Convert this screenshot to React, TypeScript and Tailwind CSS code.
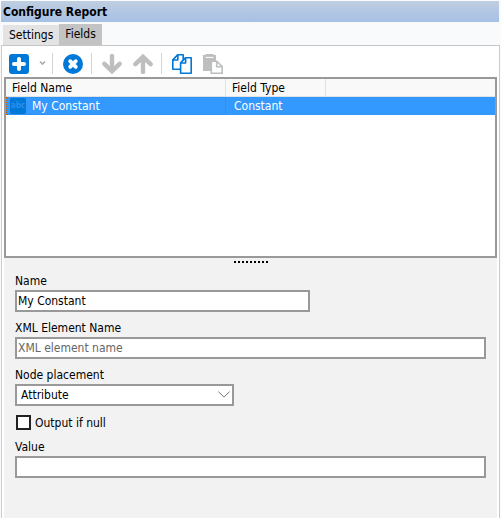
import React, { useState } from 'react';

interface Field {
  id: number;
  name: string;
  type: string;
}

const fields: Field[] = [{ id: 1, name: 'My Constant', type: 'Constant' }];

const inputClass =
  'block h-[22px] w-full rounded-none border-2 border-[#999999] bg-white px-px text-black placeholder:text-[#666666] outline-none';

const Separator: React.FC = () => <div className="h-[21px] w-px bg-[#d2d4d6]" />;

const AddIcon: React.FC = () => (
  <svg className="h-5 w-5" viewBox="0 0 20 20">
    <rect width="20" height="20" rx="3" fill="#0078d7" />
    <path d="M10 5v10M5 10h10" stroke="#fff" strokeWidth="4" strokeLinecap="round" />
  </svg>
);

const CaretIcon: React.FC = () => (
  <svg className="h-5 w-[7px]" viewBox="0 0 7 20">
    <path d="M1 7.5L3.5 10L6 7.5" fill="none" stroke="#a9abad" strokeWidth="1.6" />
  </svg>
);

const DeleteIcon: React.FC = () => (
  <svg className="h-5 w-5" viewBox="0 0 20 20">
    <circle cx="10" cy="10" r="10" fill="#0078d7" />
    <path d="M7.2 7.2l5.6 5.6M12.8 7.2l-5.6 5.6" stroke="#fff" strokeWidth="3.8" strokeLinecap="round" />
  </svg>
);

const DownIcon: React.FC = () => (
  <svg className="h-5 w-5" viewBox="0 0 20 20">
    <path d="M10 2v14M2.4 9.8L10 17.2l7.6-7.4" fill="none" stroke="#bcbec0" strokeWidth="4.4" strokeLinecap="round" />
  </svg>
);

const UpIcon: React.FC = () => (
  <svg className="h-5 w-5" viewBox="0 0 20 20">
    <path d="M10 18V4M2.4 10.2L10 2.8l7.6 7.4" fill="none" stroke="#bcbec0" strokeWidth="4.4" strokeLinecap="round" />
  </svg>
);

const CopyIcon: React.FC = () => (
  <svg className="h-5 w-5" viewBox="0 0 20 20" fill="#fff" stroke="#0078d7" strokeWidth="1.6" strokeLinejoin="round">
    <path d="M5.8.8h5.4v14.4H.8V6z" />
    <path d="M5.8.8V6H.8" />
    <path d="M13.6 3.8h5.6v15.4H8.6V9z" />
    <path d="M13.6 3.8V9h-5" />
    <path d="M5.8.8L.8 6M13.6 3.8l-5 5.2" />
  </svg>
);

const PasteIcon: React.FC = () => (
  <svg className="h-5 w-5" viewBox="0 0 20 20">
    <path d="M0 1h2.5V0h8v1H13v6H8v10H0z" fill="#bcbec0" />
    <path d="M2.5 3.4h8" stroke="#fff" strokeWidth="1" />
    <path d="M8.3 7.2h5.4l5.5 5.5v6.5H8.3z" fill="#fff" stroke="#bcbec0" strokeWidth="1.6" />
    <path d="M13.7 7.2v5.5h5.5" fill="none" stroke="#bcbec0" strokeWidth="1.6" />
  </svg>
);

const Toolbar: React.FC = () => (
  <div className="flex h-[31px] items-center bg-white pt-1 pl-[5px]">
    <button type="button" aria-label="Add field">
      <AddIcon />
    </button>
    <button type="button" aria-label="More field types" className="mr-[6px] ml-[10px]">
      <CaretIcon />
    </button>
    <Separator />
    <button type="button" aria-label="Delete field" className="mr-2 ml-[10px]">
      <DeleteIcon />
    </button>
    <Separator />
    <button type="button" aria-label="Move down" className="ml-[10px]" disabled>
      <DownIcon />
    </button>
    <button type="button" aria-label="Move up" className="mr-2 ml-[11px]" disabled>
      <UpIcon />
    </button>
    <Separator />
    <button type="button" aria-label="Copy" className="ml-[10px]">
      <CopyIcon />
    </button>
    <button type="button" aria-label="Paste" className="ml-[11px]" disabled>
      <PasteIcon />
    </button>
  </div>
);

const FieldTable: React.FC = () => (
  <div className="h-[181px] border-2 border-[#999999] bg-white">
    <table className="w-full table-fixed border-separate border-spacing-0 text-left">
      <thead>
        <tr className="h-[18px] bg-[#f9f9f9]">
          <th className="w-[220px] border-r border-b border-[#e2e2e2] p-0 pt-[2px] pl-[6px] font-normal">Field Name</th>
          <th className="w-[100px] border-r border-b border-[#e2e2e2] p-0 pt-[2px] pl-[6px] font-normal">Field Type</th>
          <th className="border-b border-[#e2e2e2] p-0" />
        </tr>
      </thead>
      <tbody>
        {fields.map((field) => (
          <tr key={field.id} className="bg-[#3399ff] text-white">
            <td className="p-0">
              <div className="flex h-[18px] items-center border border-dotted border-[#cc6600] pl-[3px]">
                <span className="mr-[6px] flex h-4 w-4 items-center justify-center rounded-xs bg-[#0078d7] text-[8px] leading-none font-bold text-[#2b90ee]">
                  abc
                </span>
                <span className="pt-px">{field.name}</span>
              </div>
            </td>
            <td className="p-0 pt-px pl-[8px]">{field.type}</td>
            <td className="p-0" />
          </tr>
        ))}
      </tbody>
    </table>
  </div>
);

const FieldForm: React.FC = () => {
  const [name, setName] = useState('My Constant');
  const [elementName, setElementName] = useState('');
  const [placement, setPlacement] = useState('Attribute');
  const [outputIfNull, setOutputIfNull] = useState(false);
  const [value, setValue] = useState('');

  return (
    <form className="flex flex-col px-[11px] pt-2">
      <label htmlFor="name" className="pt-px pb-px">Name</label>
      <div className="mb-2 max-w-[295px]">
        <input id="name" className={inputClass} value={name} onChange={(e) => setName(e.target.value)} />
      </div>

      <label htmlFor="element" className="pt-px pb-px">XML Element Name</label>
      <div className="mb-2">
        <input
          id="element"
          className={inputClass}
          placeholder="XML element name"
          value={elementName}
          onChange={(e) => setElementName(e.target.value)}
        />
      </div>

      <label htmlFor="placement" className="pt-px pb-px">Node placement</label>
      <div className="relative mb-2 max-w-[219px]">
        <select
          id="placement"
          className="block h-[22px] w-full appearance-none rounded-none border-2 border-[#999999] bg-white pl-1 outline-none"
          value={placement}
          onChange={(e) => setPlacement(e.target.value)}
        >
          <option>Attribute</option>
          <option>Element</option>
        </select>
        <svg className="pointer-events-none absolute top-[7px] right-1 h-[7px] w-3" viewBox="0 0 12 7">
          <path d="M.4.6L6 6l5.6-5.4" fill="none" stroke="#777" />
        </svg>
      </div>

      <div className="mb-2 flex h-[17px] items-center gap-1 pl-px">
        <input
          id="output-null"
          type="checkbox"
          className="h-[15px] w-[15px] appearance-none border-2 border-[#222222] bg-white checked:bg-[#0078d7]"
          checked={outputIfNull}
          onChange={(e) => setOutputIfNull(e.target.checked)}
        />
        <label htmlFor="output-null" className="pt-px">Output if null</label>
      </div>

      <label htmlFor="value" className="pt-px pb-px">Value</label>
      <input id="value" className={inputClass} value={value} onChange={(e) => setValue(e.target.value)} />
    </form>
  );
};

const App: React.FC = () => {
  return (
    <div className="flex min-h-screen flex-col bg-[#f9fafc] px-px pt-px font-['DejaVu_Sans_Condensed','DejaVu_Sans',sans-serif] text-[12px] leading-[15px] text-black">
      <h1 className="mr-px h-[21px] bg-linear-to-b from-[#bfcee1] to-[#a6c0e4] pl-[2px] leading-[22px] font-bold">
        Configure Report
      </h1>

      <div role="tablist" className="flex items-end pt-[2px] pl-[2px]">
        <button type="button" role="tab" aria-selected="false" className="h-5 bg-[#e3e3e3] px-[6px] pt-px">
          Settings
        </button>
        <button type="button" role="tab" aria-selected="true" className="h-[21px] bg-[#c3c3c3] px-[6px]">
          Fields
        </button>
      </div>

      <div className="flex grow flex-col border-x border-t border-[#c8ccd2] border-t-[#c6c6c6] bg-white px-[2px]">
        <Toolbar />
        <FieldTable />
        <div className="grow bg-[#f2f2f2]">
          {/* splitter grip */}
          <div className="flex h-[7px] items-center justify-center gap-[2px]">
            {[1, 2, 3, 4, 5, 6, 7, 8, 9].map((i) => (
              <div key={i} className="h-[2px] w-[2px] bg-black" />
            ))}
          </div>
          <FieldForm />
        </div>
      </div>
    </div>
  );
};

export default App;
